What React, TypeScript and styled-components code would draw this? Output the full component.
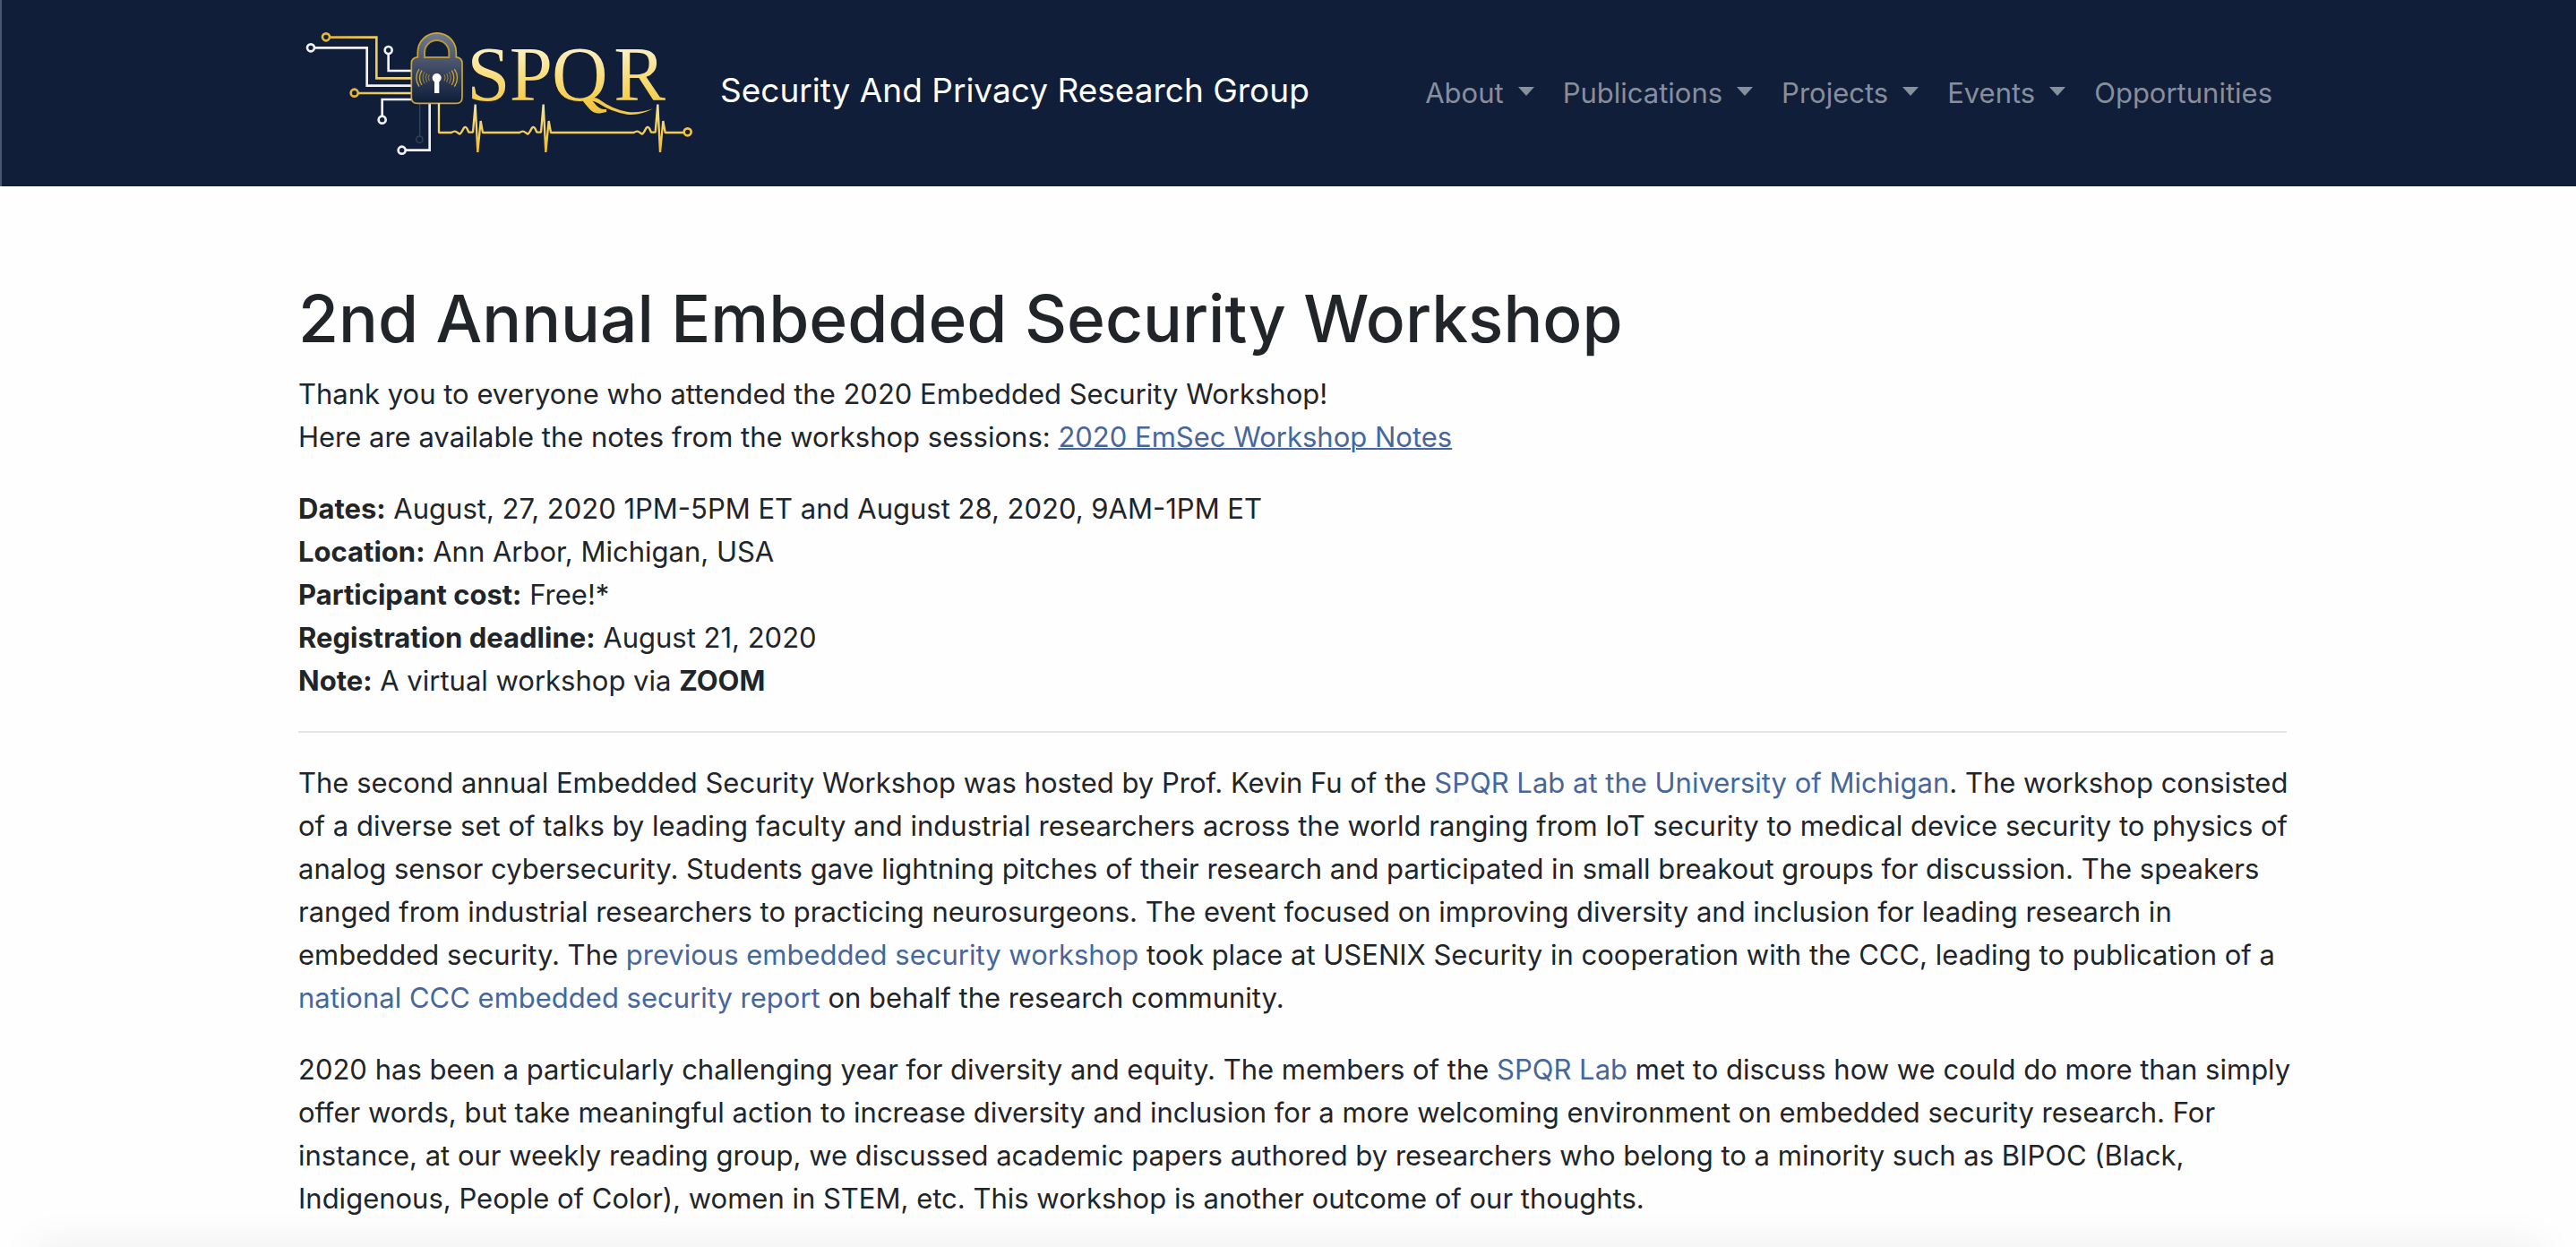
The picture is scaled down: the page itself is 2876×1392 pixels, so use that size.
import React from "react";
import styled, { createGlobalStyle } from "styled-components";

const GlobalStyle = createGlobalStyle`
  *, *::before, *::after { box-sizing: border-box; }
  body {
    margin: 0;
    background: #fefefe;
    color: #212529;
    font-family: Inter, "Liberation Sans", sans-serif;
    font-size: 31px;
    line-height: 48px;
  }
`;

const Header = styled.header`
  background: #101e3a;
  border-left: 2px solid #4a566d;
  padding: 16px 0 16px 8px;
`;

const Container = styled.div`
  max-width: 2280px;
  margin: 0 auto;
  padding: 0 30px;
`;

const Bar = styled(Container)`
  display: flex;
  align-items: center;
  justify-content: space-between;
`;

const Brand = styled.a`
  color: #fff;
  font-size: 37px;
  line-height: 60px;
  text-decoration: none;
  white-space: nowrap;
`;

const LogoArt = styled.svg`
  width: 457px;
  height: 176px;
  margin-right: 14px;
  vertical-align: middle;
`;

const Menu = styled.ul`
  display: flex;
  list-style: none;
  margin: 0;
  padding: 0;
`;

const MenuButton = styled.button`
  display: flex;
  align-items: center;
  border: 0;
  background: none;
  color: #878e9c;
  font: inherit;
  padding: 16px;
  cursor: pointer;
`;

const MenuLink = styled.a`
  display: block;
  color: #878e9c;
  padding: 16px;
  text-decoration: none;
`;

const Caret = styled.span`
  margin: 0 0 4px 16px;
  border-top: 10px solid;
  border-left: 9px solid transparent;
  border-right: 9px solid transparent;
`;

const Main = styled.main`
  padding: 100px 0 0 10px;
`;

const Title = styled.h1`
  margin: 0 0 12px;
  font-size: 73px;
  font-weight: 500;
  line-height: 96px;
`;

const Paragraph = styled.p`
  margin: 0 0 32px;
`;

const Prose = styled(Paragraph)`
  margin-right: -16px;
`;

const Rule = styled.hr`
  margin: 32px 0;
  border: 0;
  border-top: 2px solid #e4e4e5;
`;

const TextLink = styled.a<{ $underlined?: boolean }>`
  color: #47669a;
  text-decoration: ${(p) => (p.$underlined ? "underline" : "none")};
  text-decoration-thickness: 2px;
`;

const BottomShade = styled.div`
  position: fixed;
  top: 100%;
  left: 40px;
  right: 40px;
  height: 40px;
  box-shadow: 0 0 48px rgba(0, 0, 0, 0.08);
  pointer-events: none;
`;

const beat = (x: number) =>
  `L${x - 80} 384 q12 -8 20 0 l6 4 q4 2 8 -6 l8 -14 q5 -6 10 2 l6 13 h14 L${x} 290 L${x + 8} 450 L${x + 18} 345 L${x + 25} 384`;

function Logo() {
  return (
    <LogoArt viewBox="39 -12 1371 528" role="img" aria-label="SPQR logo" fill="none">
      <defs>
        <linearGradient id="gold" x1="0" y1="105" x2="0" y2="325" gradientUnits="userSpaceOnUse">
          <stop offset="0" stopColor="#fcefc0" />
          <stop offset="0.45" stopColor="#f9dc78" />
          <stop offset="0.8" stopColor="#f5cb47" />
          <stop offset="1" stopColor="#f0c23c" />
        </linearGradient>
        <linearGradient id="pulse" x1="0" y1="288" x2="0" y2="452" gradientUnits="userSpaceOnUse">
          <stop offset="0" stopColor="#f9e391" />
          <stop offset="1" stopColor="#eebb2e" />
        </linearGradient>
        <linearGradient id="wire" x1="120" y1="0" x2="420" y2="0" gradientUnits="userSpaceOnUse">
          <stop offset="0" stopColor="#dcae2f" />
          <stop offset="1" stopColor="#f5db7c" />
        </linearGradient>
        <linearGradient id="lock" x1="0" y1="50" x2="0" y2="286" gradientUnits="userSpaceOnUse">
          <stop offset="0" stopColor="#707a91" />
          <stop offset="0.4" stopColor="#4a546d" />
          <stop offset="0.75" stopColor="#25324e" />
          <stop offset="1" stopColor="#101e3a" />
        </linearGradient>
      </defs>

      <g stroke="#f1f3f8" strokeWidth="8">
        <circle cx="81" cy="100" r="12" />
        <path d="M94 100 H269 V227 H418" />
        <circle cx="341" cy="108" r="12" />
        <path d="M341 121 V177 H418" />
        <circle cx="320" cy="341" r="12" />
        <path d="M320 328 V273 H418" />
        <circle cx="386" cy="443" r="12" />
        <path d="M399 443 H479 V286" />
      </g>
      <g stroke="#35425b" strokeWidth="4">
        <circle cx="445" cy="407" r="11" />
        <path d="M446 394 V286" />
      </g>
      <g stroke="url(#wire)" strokeWidth="8">
        <circle cx="132" cy="64" r="12" stroke="#e4b738" />
        <path d="M145 65 H301 V202 H418" />
        <circle cx="227" cy="251" r="12" stroke="#e4b738" />
        <path d="M240 252 H418" />
      </g>

      <path
        d="M439 131 V115 A64 64 0 0 1 568 115 V131 Q588 134 588 152 V266 Q588 286 568 286 H438 Q418 286 418 266 V152 Q418 134 439 131 Z"
        fill="url(#lock)"
        stroke="#cfa82f"
        strokeWidth="5"
      />
      <path
        d="M462 132 V116 A41 41 0 0 1 544 116 V132 Z"
        fill="#101e3a"
        stroke="#b8962f"
        strokeWidth="6"
      />
      <g stroke="#c9a436" strokeWidth="4">
        <path d="M444 171 Q425 200 444 230" />
        <path d="M453 176 Q438 200 453 225" />
        <path d="M562 171 Q581 200 562 230" />
        <path d="M553 176 Q568 200 553 225" />
      </g>
      <g stroke="#9c883f" strokeWidth="3">
        <path d="M462 181 Q450 200 462 220" />
        <path d="M470 186 Q461 200 470 215" />
        <path d="M478 190 Q471 200 478 211" />
        <path d="M544 181 Q556 200 544 220" />
        <path d="M536 186 Q545 200 536 215" />
        <path d="M528 190 Q535 200 528 211" />
      </g>
      <circle cx="503" cy="201" r="15" fill="#fff" />
      <path d="M503 201 V252" stroke="#fff" strokeWidth="16" />

      <path
        d={`M510 286 V384 ${beat(632)} ${beat(860)} ${beat(1243)} H1329`}
        stroke="url(#pulse)"
        strokeWidth="7"
        strokeLinejoin="bevel"
      />
      <circle cx="1343" cy="382" r="12" stroke="#f0c441" strokeWidth="8" />

      <text
        x="604 746 888 1096"
        y="277"
        fontFamily='"Liberation Serif", serif'
        fontSize="260"
        fill="url(#gold)"
      >
        SPQR
      </text>
      <path
        d="M1012 272 Q1032 262 1046 272 Q1090 305 1140 314 Q1180 320 1227 304 Q1184 328 1140 323 Q1090 316 1044 286 Q1028 276 1012 278 Z"
        fill="#f3c845"
      />
    </LogoArt>
  );
}

const menus = ["About", "Publications", "Projects", "Events"];

export default function App() {
  return (
    <>
      <GlobalStyle />
      <Header>
        <Bar as="nav">
          <Brand href="#">
            <Logo />
            Security And Privacy Research Group
          </Brand>
          <Menu>
            {menus.map((name) => (
              <li key={name}>
                <MenuButton type="button" aria-haspopup="true">
                  {name}
                  <Caret />
                </MenuButton>
              </li>
            ))}
            <li>
              <MenuLink href="#opportunities">Opportunities</MenuLink>
            </li>
          </Menu>
        </Bar>
      </Header>
      <Main>
        <Container>
          <Title>2nd Annual Embedded Security Workshop</Title>
          <Paragraph>
            Thank you to everyone who attended the 2020 Embedded Security Workshop!
            <br />
            Here are available the notes from the workshop sessions:{" "}
            <TextLink href="#notes" $underlined>
              2020 EmSec Workshop Notes
            </TextLink>
          </Paragraph>
          <Paragraph>
            <strong>Dates:</strong> August, 27, 2020 1PM-5PM ET and August 28, 2020, 9AM-1PM ET
            <br />
            <strong>Location:</strong> Ann Arbor, Michigan, USA
            <br />
            <strong>Participant cost:</strong> Free!*
            <br />
            <strong>Registration deadline:</strong> August 21, 2020
            <br />
            <strong>Note:</strong> A virtual workshop via <strong>ZOOM</strong>
          </Paragraph>
          <Rule />
          <Prose>
            The second annual Embedded Security Workshop was hosted by Prof. Kevin Fu of the{" "}
            <TextLink href="#lab">SPQR Lab at the University of Michigan</TextLink>. The workshop
            consisted
            <br />
            of a diverse set of talks by leading faculty and industrial researchers across the world
            ranging from IoT security to medical device security to physics of
            <br />
            analog sensor cybersecurity. Students gave lightning pitches of their research and
            participated in small breakout groups for discussion. The speakers
            <br />
            ranged from industrial researchers to practicing neurosurgeons. The event focused on
            improving diversity and inclusion for leading research in
            <br />
            embedded security. The{" "}
            <TextLink href="#previous">previous embedded security workshop</TextLink> took place at
            USENIX Security in cooperation with the CCC, leading to publication of a
            <br />
            <TextLink href="#report">national CCC embedded security report</TextLink> on behalf the
            research community.
          </Prose>
          <Prose>
            2020 has been a particularly challenging year for diversity and equity. The members of
            the <TextLink href="#lab">SPQR Lab</TextLink> met to discuss how we could do more than
            simply
            <br />
            offer words, but take meaningful action to increase diversity and inclusion for a more
            welcoming environment on embedded security research. For
            <br />
            instance, at our weekly reading group, we discussed academic papers authored by
            researchers who belong to a minority such as BIPOC (Black,
            <br />
            Indigenous, People of Color), women in STEM, etc. This workshop is another outcome of
            our thoughts.
          </Prose>
        </Container>
      </Main>
      <BottomShade />
    </>
  );
}
